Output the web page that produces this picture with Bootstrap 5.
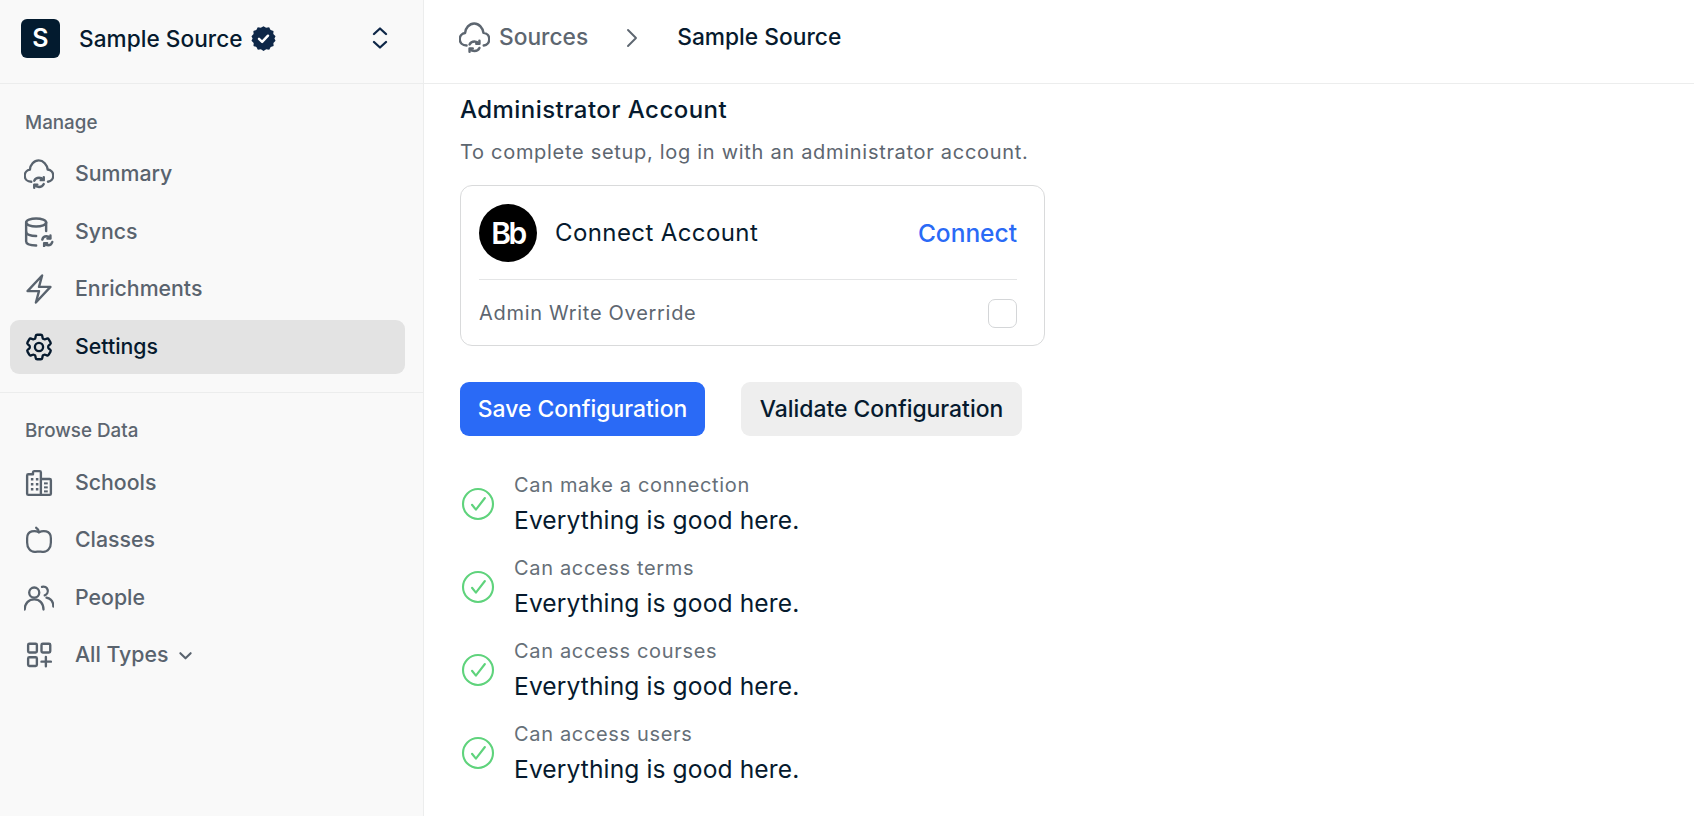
<!DOCTYPE html>
<html lang="en">
<head>
<meta charset="utf-8">
<title>Sample Source</title>
<link href="https://cdn.jsdelivr.net/npm/bootstrap@5.3.0/dist/css/bootstrap.min.css" rel="stylesheet">
<style>
html,body{height:100%}
body{font-family:Inter,"Liberation Sans",sans-serif;color:#061a2e;background:#fff;overflow:hidden}
.app-shell{height:816px}
.side-pane{width:424px;flex:none;background:#f9f9f9;border-right:1px solid #eceded}
.side-top{height:84px;padding:0 35px 6px 21px;border-bottom:1px solid #eceded}
.logo-box{width:39px;height:39px;border-radius:6px;background:#031b2f;color:#fff;font-size:25px;font-weight:600}
.src-name{font-size:22.6px;font-weight:550;margin-left:19px;margin-right:7px;letter-spacing:.05px}
.side-group{padding:0 18px 0 10px}
.group-one{height:309px;padding-top:27.5px;border-bottom:1px solid #eceded}
.group-two{padding-top:26.5px}
.group-title{font-size:18.8px;font-weight:500;color:#5d6670;padding-left:15px;line-height:22px;margin-bottom:13.5px}
.group-two .group-title{margin-bottom:14px}
.side-link{height:54px;margin-bottom:3.6px;padding-left:14px;border-radius:9px;color:#59636e;font-size:21.3px;font-weight:500;text-decoration:none}
.side-link svg{width:30px;height:30px;margin-right:21px;flex:none}
.side-link svg.caret-mini{width:15px;height:15px;margin-right:0;margin-left:10px}
.side-link.is-on{background:#e3e3e3;color:#061a2e}
.main-top{height:84px;padding:0 0 8px 35px;border-bottom:1px solid #eceded;font-size:22.75px;font-weight:500}
.crumb-gray{color:#5d6670}
.crumb-here{font-weight:550}
.crumb-icon{margin-right:9px}
.crumb-sep{margin:0 36px 0 37px}
.main-body{padding:11px 0 0 36px}
.sec-title{font-size:24px;font-weight:550;line-height:30px;letter-spacing:.45px;margin:0 0 12px}
.sec-desc{font-size:20px;color:#5d6670;line-height:30px;letter-spacing:.7px;margin:0 0 18px}
.acct-box{width:585px;height:161px;border:1px solid #d9dadb;border-radius:12px;padding:18px 27px 0 18px;margin-bottom:36px}
.bb-circle{width:58px;height:58px;border-radius:50%;background:#000;color:#fff;font-size:30px;font-weight:600;letter-spacing:-2.5px;margin-right:18px}
.acct-name{font-size:24px;letter-spacing:.4px}
.acct-link{font-size:24.5px;font-weight:550;color:#2a6af6;text-decoration:none}
.acct-rule{border-top:1px solid #e4e5e6;margin:17px 0 18px}
.acct-sub{font-size:20px;color:#5d6670;letter-spacing:.7px}
.box-check{width:29px;height:29px;border:1px solid #d4d6d8;border-radius:7px;background:#fff}
.act-btn{height:54px;border-radius:9px;font-size:22.9px;font-weight:550;padding:0;border:0;line-height:54px}
.act-save{background:#2a6af6;color:#fff;width:245px;margin-right:36px}
.act-validate{background:#eeeeee;color:#061a2e;width:281px}
.check-row{height:83px}
.check-row svg{width:36px;height:36px;margin-top:-2px;margin-right:18px;flex:none}
.check-lab{font-size:20px;color:#666f78;line-height:31px;letter-spacing:.66px}
.check-val{font-size:24.6px;line-height:38px;letter-spacing:.1px}
.check-list{margin-top:27px}
</style>
</head>
<body>
<svg width="0" height="0" class="d-none" aria-hidden="true"><defs>
<symbol id="i-cloud" viewBox="1.300 1.300 21.400 21.400" fill="none" stroke="currentColor" stroke-width="1.700" stroke-linecap="round" stroke-linejoin="round">
<path d="M6.500 17.500C3.700 17.500 1.800 15.600 1.800 13.200c0-2.200 1.600-4 3.700-4.300C5.700 5.600 8.400 2.300 11.800 2.300c3.300 0 6 3.200 6.400 6.500 2.300.2 4 2.100 4 4.400 0 2.200-1.600 4-3.800 4.300"/>
<path d="M8.600 16.800c.6-1.300 1.900-2.100 3.400-2.100 1.200 0 2.300.5 3 1.400"/><path d="M15.400 14.200v2.200h-2.200"/>
<path d="M15.400 19.200c-.6 1.300-1.900 2.100-3.400 2.100-1.200 0-2.300-.5-3-1.400"/><path d="M8.600 21.800v-2.200h2.200"/>
</symbol>
<symbol id="i-db" viewBox="1.500 1.500 21 21" fill="none" stroke="currentColor" stroke-width="1.700" stroke-linecap="round" stroke-linejoin="round">
<ellipse cx="10" cy="5.300" rx="7" ry="2.800"/>
<path d="M3 5.300v13.400c0 1.500 2.800 2.600 7 2.800"/><path d="M3 12c0 1.600 3 2.800 7 2.800"/><path d="M17 5.300v6"/>
<path d="M14.300 17.300c.4-1.400 1.500-2.300 2.900-2.300 1 0 1.900.5 2.500 1.300"/><path d="M20 14.500v2.100h-2.100"/>
<path d="M21.300 19c-.4 1.400-1.500 2.300-2.900 2.300-1 0-1.900-.5-2.500-1.300"/><path d="M15.600 22v-2.100h2.100"/>
</symbol>
<symbol id="i-bolt" viewBox="1.200 1.200 21.600 21.600" fill="none" stroke="currentColor" stroke-width="1.700" stroke-linejoin="round"><path d="m3.750 13.500 10.500-11.250L12 10.500h8.250L9.750 21.750 12 13.500H3.750Z"/></symbol>
<symbol id="i-gear" viewBox="1 1 22 22" fill="none" stroke="currentColor" stroke-width="1.700" stroke-linejoin="round">
<path d="M9.594 3.940c.09-.542.56-.94 1.110-.94h2.593c.55 0 1.020.398 1.110.94l.213 1.281c.063.374.313.686.645.87.074.04.147.083.22.127.325.196.72.257 1.075.124l1.217-.456a1.125 1.125 0 0 1 1.370.49l1.296 2.247a1.125 1.125 0 0 1-.26 1.431l-1.003.827c-.293.241-.438.613-.43.992a7.723 7.723 0 0 1 0 .255c-.008.378.137.75.43.991l1.004.827c.424.35.534.955.26 1.430l-1.298 2.247a1.125 1.125 0 0 1-1.369.491l-1.217-.456c-.355-.133-.75-.072-1.076.124a6.470 6.470 0 0 1-.22.128c-.331.183-.581.495-.644.869l-.213 1.281c-.09.543-.56.94-1.110.94h-2.594c-.55 0-1.019-.398-1.110-.94l-.213-1.281c-.062-.374-.312-.686-.644-.87a6.520 6.520 0 0 1-.22-.127c-.325-.196-.72-.257-1.076-.124l-1.217.456a1.125 1.125 0 0 1-1.369-.49l-1.297-2.247a1.125 1.125 0 0 1 .26-1.431l1.004-.827c.292-.24.437-.613.43-.991a6.932 6.932 0 0 1 0-.255c.007-.38-.138-.751-.43-.992l-1.004-.827a1.125 1.125 0 0 1-.26-1.430l1.297-2.247a1.125 1.125 0 0 1 1.370-.491l1.216.456c.356.133.751.072 1.076-.124.072-.044.146-.086.22-.128.332-.183.582-.495.644-.869l.214-1.280Z"/>
<circle cx="12" cy="12" r="3"/></symbol>
<symbol id="i-build" viewBox="0 0 24 24" fill="none" stroke="currentColor" stroke-width="1.900" stroke-linejoin="round">
<path d="M13.500 21.500V3.500c0-.6-.4-1-1-1H8.200c-.5 0-.9.400-1 .9V5H3.500c-.6 0-1 .4-1 1v14.500c0 .6.400 1 1 1h17c.6 0 1-.4 1-1V9.800c0-.6-.4-1-1-1h-7"/>
<g fill="currentColor" stroke="none"><rect x="5.500" y="8" width="2" height="2"/><rect x="9.500" y="8" width="2" height="2"/><rect x="5.500" y="12" width="2" height="2"/><rect x="9.500" y="12" width="2" height="2"/><rect x="5.500" y="16" width="2" height="2"/><rect x="9.500" y="16" width="2" height="2"/><rect x="16" y="11.500" width="3" height="1.600"/><rect x="16" y="14.700" width="3" height="1.600"/><rect x="16" y="17.900" width="3" height="1.600"/></g></symbol>
<symbol id="i-apple" viewBox="0 0 24 24" fill="none" stroke="currentColor" stroke-width="1.800" stroke-linecap="round" stroke-linejoin="round">
<path d="M12 5.800c1.500-.8 3.800-1.200 5.800-.7 2.300.6 3.700 2.500 3.700 5.400v3.500c0 4.200-2.500 7.500-6 7.500-1.500 0-2.500-.3-3.500-.3s-2 .3-3.500.3c-3.500 0-6-3.300-6-7.500v-3.500c0-2.900 1.400-4.800 3.700-5.400 2-.5 4.300-.1 5.800.7Z"/><path d="M12 5.800c-.2-1.500-1-2.800-2.300-3.600"/></symbol>
<symbol id="i-users" viewBox="1 1 22 22" fill="none" stroke="currentColor" stroke-width="1.700" stroke-linecap="round" stroke-linejoin="round">
<circle cx="8.500" cy="8" r="3.700"/><path d="M1.500 20.500c0-4.600 3-7.500 7-7.500s6.800 2.900 6.800 7.500"/><path d="M14.200 3.800a3.200 3.200 0 1 1 2 6.200"/><path d="M17.500 11.800c2.900.6 5 2.900 5 6.500"/></symbol>
<symbol id="i-plus" viewBox="0 0 24 24" fill="none" stroke="currentColor" stroke-width="1.900" stroke-linecap="round" stroke-linejoin="round">
<rect x="3.300" y="3" width="7" height="7" rx="1"/><rect x="14" y="3" width="7" height="7" rx="1"/><rect x="3.300" y="13.800" width="7" height="7" rx="1"/><path d="M17.500 13.500v7.500M14 17.300h7.500"/></symbol>
<symbol id="i-ok" viewBox="0 0 24 24" fill="none" stroke="#5fd37c" stroke-width="1.400" stroke-linecap="round" stroke-linejoin="round"><circle cx="12" cy="12" r="10"/><path d="m8 12.500 2.600 3.300L16.600 8"/></symbol>
</defs></svg>

<div class="d-flex app-shell">
  <aside class="side-pane d-flex flex-column">
    <div class="side-top d-flex align-items-center">
      <div class="logo-box d-flex align-items-center justify-content-center">S</div>
      <span class="src-name">Sample Source</span>
      <svg width="27" height="27" viewBox="0 0 24 24"><path fill="#0e2748" d="M12 1l2.300 1.500 2.700-.5 1.300 2.400 2.600 1-.2 2.700L22.700 10l-1 2 1 2-1.900 1.900.2 2.700-2.600 1-1.300 2.400-2.700-.5L12 23l-2.300-1.500-2.700.5-1.300-2.400-2.600-1 .2-2.700L1.300 14l1-2-1-2 1.900-1.900L3 5.400l2.600-1L6.900 2l2.700.5z"/><path fill="none" stroke="#fff" stroke-width="2.200" stroke-linecap="round" stroke-linejoin="round" d="m8 12.300 2.800 2.700 5.200-5.500"/></svg>
      <svg class="ms-auto" width="16" height="24" viewBox="0 0 16 24" fill="none" stroke="#0e2748" stroke-width="2.300" stroke-linecap="round" stroke-linejoin="round"><path d="m2 7 6-5.500 6 5.500M2 15l6 5.500 6-5.500"/></svg>
    </div>
    <nav class="side-group group-one">
      <div class="group-title">Manage</div>
      <a class="side-link d-flex align-items-center" href="#"><svg><use href="#i-cloud"/></svg>Summary</a>
      <a class="side-link d-flex align-items-center" href="#"><svg><use href="#i-db"/></svg>Syncs</a>
      <a class="side-link d-flex align-items-center" href="#"><svg><use href="#i-bolt"/></svg>Enrichments</a>
      <a class="side-link is-on d-flex align-items-center" href="#"><svg><use href="#i-gear"/></svg>Settings</a>
    </nav>
    <nav class="side-group group-two">
      <div class="group-title">Browse Data</div>
      <a class="side-link d-flex align-items-center" href="#"><svg><use href="#i-build"/></svg>Schools</a>
      <a class="side-link d-flex align-items-center" href="#"><svg><use href="#i-apple"/></svg>Classes</a>
      <a class="side-link d-flex align-items-center" href="#"><svg><use href="#i-users"/></svg>People</a>
      <a class="side-link d-flex align-items-center" href="#"><svg><use href="#i-plus"/></svg>All Types<svg class="caret-mini" viewBox="0 0 16 16" fill="none" stroke="currentColor" stroke-width="2.200" stroke-linecap="round" stroke-linejoin="round"><path d="m2.500 5.500 5.500 5.500 5.500-5.500"/></svg></a>
    </nav>
  </aside>
  <main class="flex-grow-1">
    <div class="main-top d-flex align-items-center">
      <svg class="crumb-gray crumb-icon" width="31" height="31"><use href="#i-cloud"/></svg>
      <span class="crumb-gray">Sources</span>
      <svg class="crumb-gray crumb-sep" width="16" height="22" viewBox="0 0 16 22" fill="none" stroke="currentColor" stroke-width="1.900" stroke-linecap="round" stroke-linejoin="round"><path d="m3 3 8 8-8 8"/></svg>
      <span class="crumb-here">Sample Source</span>
    </div>
    <div class="main-body">
      <h2 class="sec-title">Administrator Account</h2>
      <p class="sec-desc">To complete setup, log in with an administrator account.</p>
      <div class="acct-box">
        <div class="d-flex align-items-center">
          <div class="bb-circle d-flex align-items-center justify-content-center">Bb</div>
          <span class="acct-name">Connect Account</span>
          <a class="acct-link ms-auto" href="#">Connect</a>
        </div>
        <div class="acct-rule"></div>
        <div class="d-flex align-items-center justify-content-between">
          <span class="acct-sub">Admin Write Override</span>
          <div class="box-check"></div>
        </div>
      </div>
      <div class="d-flex">
        <button class="act-btn act-save" type="button">Save Configuration</button>
        <button class="act-btn act-validate" type="button">Validate Configuration</button>
      </div>
      <div class="check-list">
        <div class="check-row d-flex align-items-center"><svg><use href="#i-ok"/></svg><div><div class="check-lab">Can make a connection</div><div class="check-val">Everything is good here.</div></div></div>
        <div class="check-row d-flex align-items-center"><svg><use href="#i-ok"/></svg><div><div class="check-lab">Can access terms</div><div class="check-val">Everything is good here.</div></div></div>
        <div class="check-row d-flex align-items-center"><svg><use href="#i-ok"/></svg><div><div class="check-lab">Can access courses</div><div class="check-val">Everything is good here.</div></div></div>
        <div class="check-row d-flex align-items-center"><svg><use href="#i-ok"/></svg><div><div class="check-lab">Can access users</div><div class="check-val">Everything is good here.</div></div></div>
      </div>
    </div>
  </main>
</div>
<script src="https://cdn.jsdelivr.net/npm/bootstrap@5.3.0/dist/js/bootstrap.bundle.min.js"></script>
</body>
</html>
